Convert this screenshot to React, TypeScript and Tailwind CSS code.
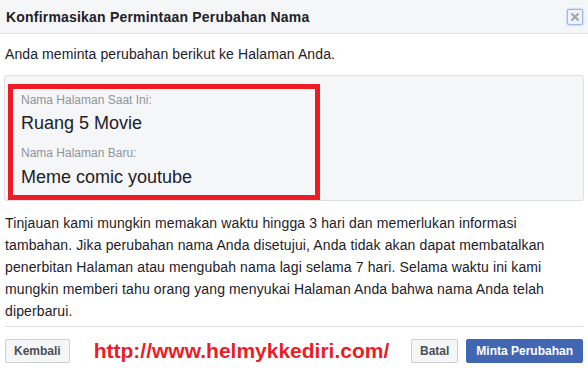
import React from 'react';

const paragraph = [
  'Tinjauan kami mungkin memakan waktu hingga 3 hari dan memerlukan informasi',
  'tambahan. Jika perubahan nama Anda disetujui, Anda tidak akan dapat membatalkan',
  'penerbitan Halaman atau mengubah nama lagi selama 7 hari. Selama waktu ini kami',
  'mungkin memberi tahu orang yang menyukai Halaman Anda bahwa nama Anda telah',
  'diperbarui.',
];

function CloseButton() {
  return (
    <span className="flex h-[16px] w-[16px] items-center justify-center rounded-[2px] border border-[#9db7f2] bg-[#eef2fb] shadow-[0_0_2px_#7ea2ee]">
      <svg width="10" height="10" viewBox="0 0 10 10" aria-hidden="true">
        <path d="M1.5 1.5L8.5 8.5M8.5 1.5L1.5 8.5" stroke="#a0a3a8" strokeWidth="2" />
      </svg>
    </span>
  );
}

export default function App() {
  return (
    <div className="h-[368px] w-[588px] overflow-hidden bg-white font-['Liberation_Sans',Arial,sans-serif] text-[#1d2129]">
      {/* header */}
      <div className="flex h-[34px] items-center justify-between border-b border-[#e5e5e5] bg-[#f5f6f7] pl-[6px] pr-[5px]">
        <h1 className="text-[14px] font-bold leading-[18px] tracking-[0.2px]">Konfirmasikan Permintaan Perubahan Nama</h1>
        <CloseButton />
      </div>

      <div className="px-[4px]">
        <p className="pl-[1px] pt-[11px] text-[14px] leading-[19.3px] tracking-[0.1px]">
          Anda meminta perubahan berikut ke Halaman Anda.
        </p>

        <div className="mt-[11px] h-[126px] rounded-[3px] border border-[#dddfe2] bg-[#f5f6f7] pl-[3px] pt-[8px]">
          <div className="h-[116px] w-[312px] border-[5px] border-[#ed1c24] pl-[8px] pt-[3px]">
            <div className="text-[12px] leading-[16px] text-[#90949c]">Nama Halaman Saat Ini:</div>
            <div className="mt-[4px] text-[18px] leading-[22px]">Ruang 5 Movie</div>
            <div className="mt-[11px] text-[12px] leading-[16px] text-[#90949c]">Nama Halaman Baru:</div>
            <div className="mt-[5px] text-[18px] leading-[22px]">Meme comic youtube</div>
          </div>
        </div>

        <p className="mt-[11px] pl-[1px] text-[14px] leading-[22px] tracking-[0.12px]">
          {paragraph.map((line, i) => (
            <span key={i} className="block">
              {line}
            </span>
          ))}
        </p>

        <div className="mx-[1px] mt-[4px] border-t border-[#dddfe2]" />

        {/* footer */}
        <div className="mt-[12px] flex items-center justify-between px-[1px]">
          <div className="flex items-center">
            <button className="h-[24px] rounded-[2px] border border-[#ccd0d5] bg-[#f5f6f7] px-[8px] text-[12px] font-bold text-[#4b4f56]">
              Kembali
            </button>
            <span className="ml-[24px] text-[21px] font-bold leading-[24px] text-[#ed1c24]">
              http://www.helmykkediri.com/
            </span>
          </div>
          <div className="flex items-center gap-[8px]">
            <button className="h-[24px] rounded-[2px] border border-[#ccd0d5] bg-[#f5f6f7] px-[8px] text-[12px] font-bold text-[#4b4f56]">
              Batal
            </button>
            <button className="h-[24px] rounded-[2px] border border-[#4267b2] bg-[#4267b2] px-[9px] text-[12px] font-bold text-white">
              Minta Perubahan
            </button>
          </div>
        </div>
      </div>
    </div>
  );
}
